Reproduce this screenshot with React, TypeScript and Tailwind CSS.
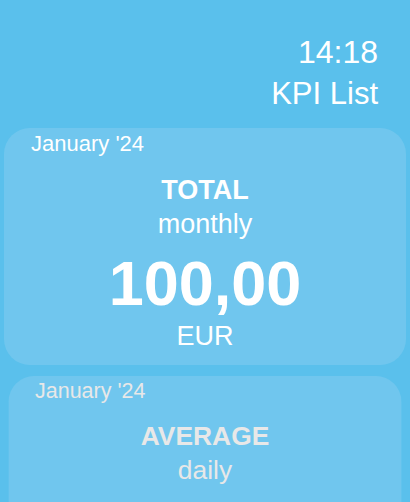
import React from "react";

type Kpi = {
  period: string;
  title: string;
  interval: string;
  value?: string;
  unit?: string;
  dim?: boolean;
};

const KPIS: Kpi[] = [
  { period: "January '24", title: "TOTAL", interval: "monthly", value: "100,00", unit: "EUR" },
  { period: "January '24", title: "AVERAGE", interval: "daily", dim: true },
];

function KpiCard({ kpi }: { kpi: Kpi }) {
  const text = kpi.dim ? "text-[#e8e8e8]" : "text-white";
  return (
    <div
      className={`min-h-[237px] rounded-[26px] bg-[#70c6ee] pt-[4px] pb-[14px] ${text} ${
        kpi.dim ? "origin-top scale-[0.977]" : ""
      }`}
    >
      <div className="pl-[27px] text-[22px] leading-[24px]">{kpi.period}</div>
      <div className="flex flex-col items-center">
        <div className="mt-[19px] text-[27px] leading-[30px] font-bold">{kpi.title}</div>
        <div className="mt-[4px] text-[27px] leading-[30px]">{kpi.interval}</div>
        {kpi.value && (
          <div className="mt-[12px] text-[63px] leading-[64px] font-bold">{kpi.value}</div>
        )}
        {kpi.unit && <div className="mt-[6px] text-[27px] leading-[30px]">{kpi.unit}</div>}
      </div>
    </div>
  );
}

export default function App() {
  return (
    <div
      className="h-[502px] w-full overflow-hidden bg-[#5ac0ec] px-[4px]"
      style={{ fontFamily: '"Liberation Sans", Arial, sans-serif' }}
    >
      <div className="flex flex-col items-end pt-[33px] pr-[28px] text-white">
        <div className="text-[32px] leading-[38px]">14:18</div>
        <div className="mt-[4px] text-[31px] leading-[38px]">KPI List</div>
      </div>
      <div className="mt-[15px] flex flex-col gap-[11px]">
        {KPIS.map((k) => (
          <KpiCard key={k.title} kpi={k} />
        ))}
      </div>
    </div>
  );
}
